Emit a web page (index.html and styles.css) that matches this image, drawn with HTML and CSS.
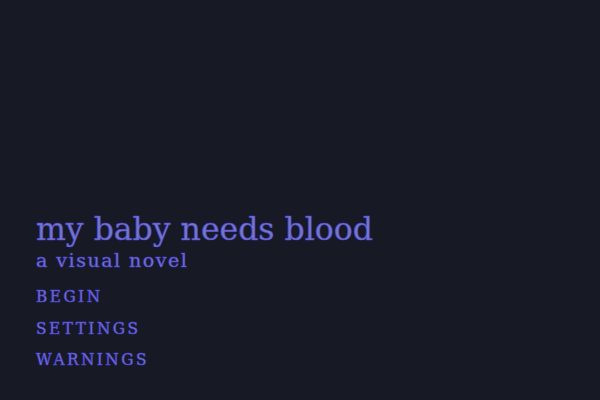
FILE: index.html
```html
<!DOCTYPE html>
<html>
<head>
    <title>my baby needs blood</title>
    <meta charset="UTF-8">
    <link rel="stylesheet" href="styles.css">
</head>
<body>
    <div class="title-screen">
        <div class="heading">
            <h1 class="title">my baby needs blood</h1>
            <p class="subtitle">a visual novel</p>
        </div>
        <nav class="menu">
            <a class="menu-item" href="#">BEGIN</a>
            <a class="menu-item" href="#">SETTINGS</a>
            <a class="menu-item" href="#">WARNINGS</a>
        </nav>
    </div>
</body>
</html>
```

FILE: styles.css
```css
html, body {
    margin: 0;
    height: 100%;
    background-color: #171a24;
}
.title-screen {
    height: 100%;
    box-sizing: border-box;
    display: flex;
    flex-direction: column;
    justify-content: flex-end;
    padding: 0 0 24px 36px;
    font-family: "DejaVu Serif", "Liberation Serif", serif;
    color: #7378c6;
    text-shadow: 0 0 1px #3b30c4;
    -webkit-text-stroke: 0.5px #4b40cc;
}
.title {
    margin: 0;
    font-size: 31.5px;
    font-weight: normal;
    line-height: 32px;
}
.subtitle {
    margin: 3px 0 0;
    font-size: 19px;
    letter-spacing: 1.5px;
    line-height: 24px;
}
.menu {
    display: flex;
    flex-direction: column;
    margin-top: 9px;
}
.menu-item {
    color: inherit;
    text-decoration: none;
    font-size: 17px;
    font-stretch: condensed;
    letter-spacing: 2.5px;
    line-height: 31.7px;
}
```
